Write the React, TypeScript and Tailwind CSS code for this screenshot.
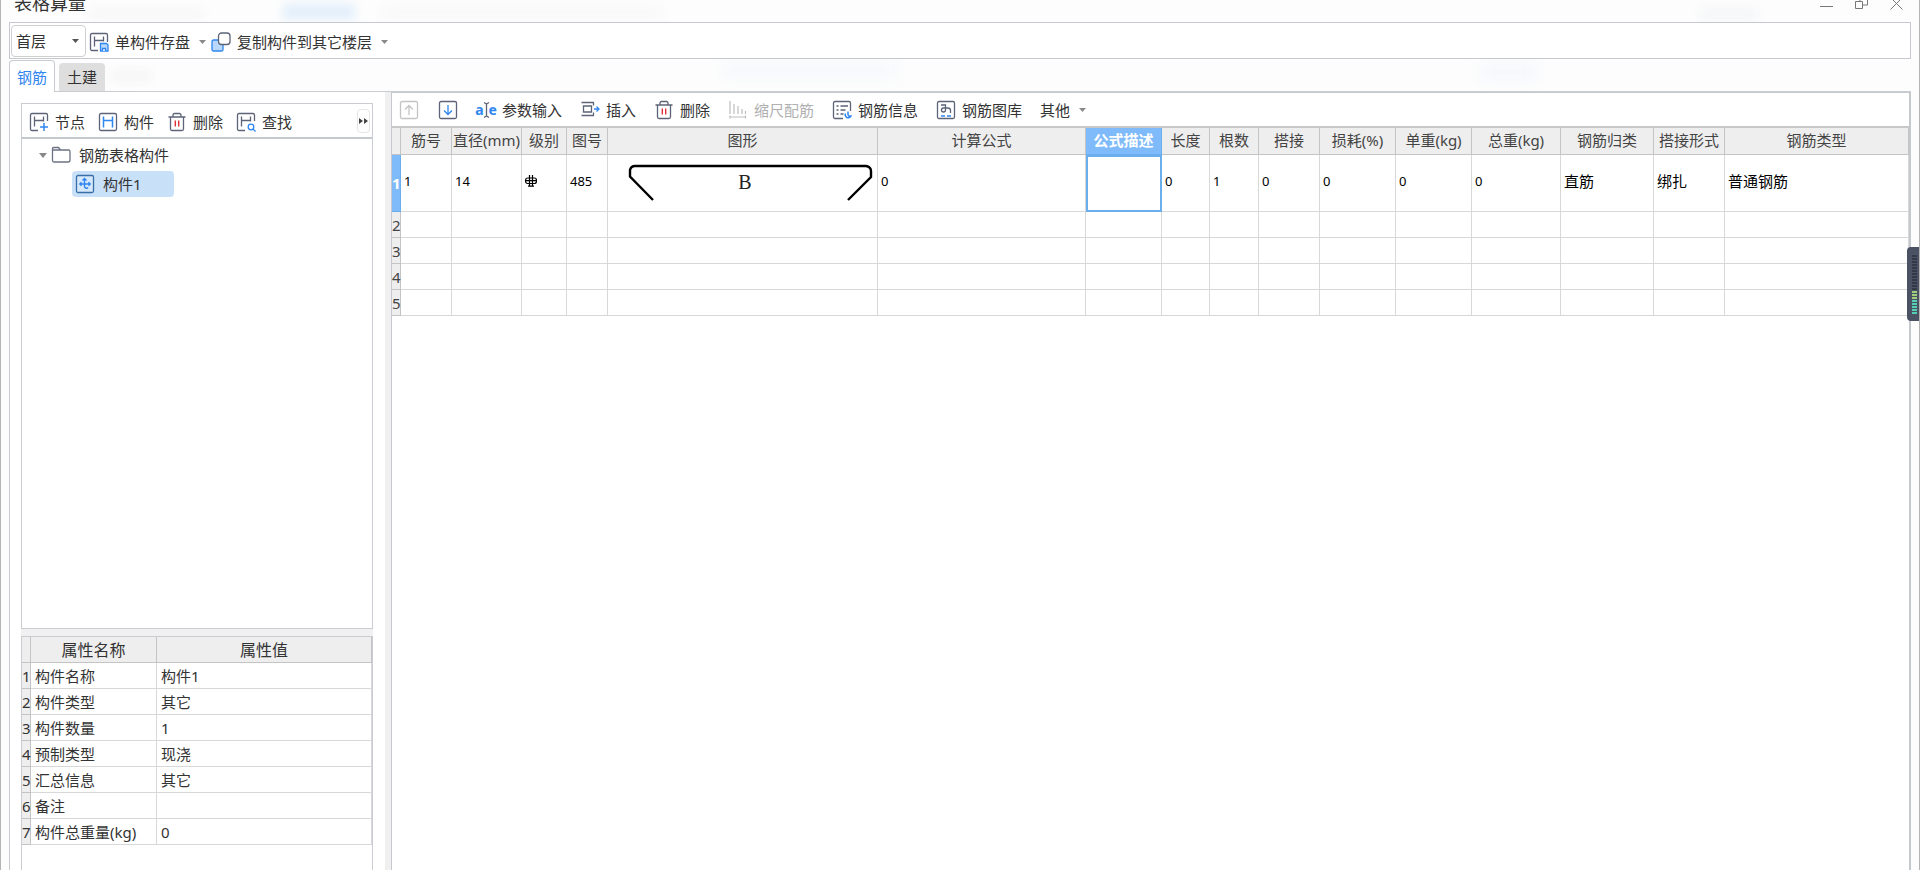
import React, { useState } from 'react';

type IconProps = { className?: string };

const Svg: React.FC<{ children: React.ReactNode; className?: string }> = ({ children, className = 'text-[#5d6478]' }) => (
  <svg className={`w-5 h-5 shrink-0 ${className}`} viewBox="0 0 20 20" fill="none" stroke="currentColor" strokeWidth="1.3">
    {children}
  </svg>
);

const Caret: React.FC<IconProps> = ({ className = 'text-[#8a8a8a]' }) => (
  <svg className={`w-[7px] h-1 shrink-0 ${className}`} viewBox="0 0 7 4" fill="currentColor">
    <path d="M0 0h7L3.5 4z" />
  </svg>
);

const SaveIcon = () => (
  <Svg>
    <path d="M9 18.5H3A1.5 1.5 0 0 1 1.5 17V3A1.5 1.5 0 0 1 3 1.5h14A1.5 1.5 0 0 1 18.5 3v7" />
    <path d="M5.5 14.5v-10M14.5 9.500v-5M5.500 8.500h9" />
    <path d="M11.500 11.500h6l1.500 1.500v6h-7.500z" stroke="#2f86f0" fill="#b9d8fb" />
    <path d="M13.500 19v-2.500h3V19" stroke="#2f86f0" fill="#fff" />
  </Svg>
);

const CopyIcon = () => (
  <Svg>
    <rect x="1" y="8" width="11" height="11" rx="1.5" stroke="#2f86f0" fill="#b9d8fb" />
    <rect x="7.5" y="1" width="11.5" height="11.5" rx="3" fill="#fff" />
  </Svg>
);

const NodeIcon = () => (
  <Svg>
    <path d="M9 18.5H3A1.5 1.5 0 0 1 1.5 17V3A1.5 1.5 0 0 1 3 1.5h14A1.5 1.5 0 0 1 18.5 3v6" />
    <path d="M5.5 14.5v-10M14.5 9.5v-5M5.5 8.5h9" />
    <path d="M15 11v8M11 15h8" stroke="#2f86f0" strokeWidth="1.5" />
  </Svg>
);

const MemberIcon = () => (
  <Svg>
    <rect x="1.5" y="1.5" width="17" height="17" rx="1.5" />
    <path d="M5.5 15.5v-11M14.5 15.5v-11M5.5 8.5h9" stroke="#2f86f0" strokeWidth="1.5" />
  </Svg>
);

const FindIcon = () => (
  <Svg>
    <path d="M9 18.5H3A1.5 1.5 0 0 1 1.5 17V3A1.5 1.5 0 0 1 3 1.5h14A1.5 1.5 0 0 1 18.5 3v6" />
    <path d="M5.5 14.5v-10M14.5 9.5v-5M5.5 8.5h9" />
    <circle cx="15" cy="15" r="2.8" stroke="#2f86f0" />
    <path d="M17 17l2.5 2.5" stroke="#2f86f0" />
  </Svg>
);

const TrashIcon = () => (
  <Svg>
    <path d="M1.5 5h17M3.5 5v12A1.5 1.5 0 0 0 5 18.5h10a1.5 1.5 0 0 0 1.5-1.5V5M6 5V3A1.5 1.5 0 0 1 7.5 1.5h5A1.5 1.5 0 0 1 14 3v2" />
    <path d="M8.3 8.500v6M11.700 8.500v6" stroke="#e2303a" strokeWidth="1.4" />
  </Svg>
);

const UpIcon = () => (
  <Svg className="text-[#c4c4c4]">
    <rect x="1.5" y="1.5" width="17" height="17" rx="1.5" />
    <path d="M10 15V5.5M6 9.5l4-4 4 4" />
  </Svg>
);

const DownIcon = () => (
  <Svg>
    <rect x="1.5" y="1.5" width="17" height="17" rx="1.5" />
    <path d="M10 5v9.5M6 10.5l4 4 4-4" stroke="#2f86f0" />
  </Svg>
);

const ParamIcon = () => (
  <span className="flex w-5 shrink-0 items-center justify-center text-[14px] leading-5 font-bold text-[#2f86f0]">
    a
    <svg className="w-[5px] h-4 shrink-0 overflow-visible" viewBox="0 0 5 16" fill="none" stroke="#5d6478" strokeWidth="1.3">
      <path d="M0 0.5L2.5 2 5 0.5M2.5 2v12M0 15.5L2.5 14 5 15.5" />
    </svg>
    e
  </span>
);

const InsertIcon = () => (
  <Svg>
    <path d="M1.5 2.5h12.5M1.500 15.500H14M3.500 6h8v6h-8zM13.500 2.500v3M13.500 15.500v-3" />
    <path d="M14 9h5M16.500 6.500L19 9l-2.500 2.500" stroke="#2f86f0" />
  </Svg>
);

const ScaleIcon = () => (
  <Svg className="text-[#bdbdbd]">
    <path d="M2 1v13M6 4v10M10 6v8M14 9v5M17.5 11v3M2 17h16M2 15.5v3M17.5 15.5v3" strokeWidth="1.2" />
  </Svg>
);

const InfoIcon = () => (
  <Svg>
    <path d="M11 18.5H3A1.5 1.5 0 0 1 1.5 17V3A1.5 1.5 0 0 1 3 1.5h14A1.5 1.5 0 0 1 18.5 3v8" />
    <path d="M4.5 6h2M8.5 6h7.5M4.5 10h2M8.5 10h5M4.5 14h2M8.5 14h3" />
    <path d="M16 11.5v4M13.5 13.5a3 3 0 1 0 5.5 2.500h-3" stroke="#2f86f0" strokeWidth="1.5" />
  </Svg>
);

const LibraryIcon = () => (
  <Svg>
    <rect x="1.5" y="1.5" width="17" height="17" rx="1.5" />
    <path d="M5 5h4.5v5a2 2 0 1 1-2-2H12a2.5 2.5 0 0 1 2.5 2.5V13" />
    <path d="M5 16h4M11 16h4" stroke="#2f86f0" strokeWidth="1.5" />
  </Svg>
);

const FolderIcon = () => (
  <Svg className="text-[#6d7385]">
    <path d="M1.5 15.500V3.500A1 1 0 0 1 2.500 2.500h5L9.500 5h8a1.500 1.500 0 0 1 1.500 1.500V15a2 2 0 0 1-2 2H3a1.500 1.500 0 0 1-1.500-1.500zM9.500 5h-8" />
  </Svg>
);

const ComponentIcon = () => (
  <Svg className="text-[#3a6ea5]">
    <rect x="1.5" y="1.5" width="17" height="17" rx="1.5" fill="#d6e8fc" />
    <path d="M9.500 12V5M7.500 6.500L9.500 4.500l2 2M5 10h9.500M6.500 8.300L4.800 10l1.700 1.700M13.500 8.300l1.700 1.700-1.700 1.700M9.500 12a2 2 0 0 0 3.500 1.500" stroke="#2f86f0" strokeWidth="1.4" />
  </Svg>
);

interface ToolButtonProps {
  icon?: React.ReactNode;
  label: string;
  caret?: boolean;
  disabled?: boolean;
}

const ToolButton: React.FC<ToolButtonProps> = ({ icon, label, caret, disabled }) => (
  <button disabled={disabled} className={`flex items-center gap-[6px] whitespace-nowrap ${disabled ? 'text-[#b0b0b0]' : 'text-[#333]'}`}>
    {icon}
    <span>{label}</span>
    {caret && <span className="pl-[3px]"><Caret /></span>}
  </button>
);

// 钢筋 485 号图形
const BarShape = () => (
  <svg className="block w-[269px] h-14" viewBox="0 0 269 56" fill="none" stroke="#000" strokeWidth="2.4">
    <path d="M45 45L22 21.5V15q1-4 5-4H258q5 1 5 5v6L240 45" />
    <text x="137" y="34" textAnchor="middle" fontSize="20" fill="#222" stroke="none" fontFamily="'Liberation Serif', serif">B</text>
  </svg>
);

const GradeSymbol = () => (
  <svg className="w-3 h-3" viewBox="0 0 12 12" fill="none" stroke="#000" strokeWidth="1.2" aria-label="HRB400">
    <rect x="0.6" y="3" width="10.8" height="5.5" rx="2" />
    <path d="M4.5 0v11.5M7.5 0v11.5M1 5.7h10M3 11.2h6" />
  </svg>
);

const columns = [
  { title: '筋号', width: 'w-[51px]' },
  { title: '直径(mm)', width: 'w-[70px]' },
  { title: '级别', width: 'w-[45px]' },
  { title: '图号', width: 'w-[41px]' },
  { title: '图形', width: 'w-[270px]' },
  { title: '计算公式', width: 'w-[208px]' },
  { title: '公式描述', width: 'w-[76px]' },
  { title: '长度', width: 'w-[48px]' },
  { title: '根数', width: 'w-[49px]' },
  { title: '搭接', width: 'w-[61px]' },
  { title: '损耗(%)', width: 'w-[76px]' },
  { title: '单重(kg)', width: 'w-[76px]' },
  { title: '总重(kg)', width: 'w-[89px]' },
  { title: '钢筋归类', width: 'w-[93px]' },
  { title: '搭接形式', width: 'w-[71px]' },
  { title: '钢筋类型', width: '' },
];

const SHAPE_COLUMN = 4;
const ACTIVE_COLUMN = 6;

const firstRow: React.ReactNode[] = [
  '1', '14', <GradeSymbol />, '485', <BarShape />, '0', '', '0', '1', '0', '0', '0', '0', '直筋', '绑扎', '普通钢筋',
];

const properties = [
  ['构件名称', '构件1'],
  ['构件类型', '其它'],
  ['构件数量', '1'],
  ['预制类型', '现浇'],
  ['汇总信息', '其它'],
  ['备注', ''],
  ['构件总重量(kg)', '0'],
];

const RebarTable = () => (
  <table className="w-full table-fixed border-separate border-spacing-0">
    <colgroup>
      <col className="w-[9px]" />
      {columns.map((c) => <col key={c.title} className={c.width} />)}
    </colgroup>
    <thead>
      <tr className="h-[27px] bg-[#eeeeee] text-[#444]">
        <th className="border-r border-b border-[#c4c4c4]" />
        {columns.map((c, i) => (
          <th
            key={c.title}
            className={`border-r border-b px-0 pt-0 pb-[2px] whitespace-nowrap ${
              i === ACTIVE_COLUMN ? 'border-[#6aaeee] bg-[#7fbbfb] font-bold text-white' : 'border-[#c4c4c4] font-normal'
            }`}
          >
            {c.title}
          </th>
        ))}
      </tr>
    </thead>
    <tbody>
      <tr className="h-[57px] text-black">
        <th className="border-r border-b border-[#6aaeee] bg-[#7fbbfb] p-0 font-bold text-white">1</th>
        {firstRow.map((value, i) => {
          if (i === ACTIVE_COLUMN) {
            return (
              <td key={i} className="h-[57px] p-0">
                <input aria-label="公式描述" className="block h-[57px] w-full border-2 border-[#6aaeee] bg-white px-1 outline-none" />
              </td>
            );
          }
          return (
            <td
              key={i}
              className={`border-r border-b border-[#d8d8d8] pt-0 pr-0 ${i === SHAPE_COLUMN ? 'p-0' : 'pb-1 pl-[3px]'} ${i < 13 ? 'text-[13px]' : ''}`}
            >
              {value}
            </td>
          );
        })}
      </tr>
      {[2, 3, 4, 5].map((n) => (
        <tr key={n} className="h-[26px]">
          <th className="border-r border-b border-[#c4c4c4] bg-[#eeeeee] p-0 font-normal text-[#444]">{n}</th>
          {columns.map((c) => <td key={c.title} className="border-r border-b border-[#d8d8d8] p-0" />)}
        </tr>
      ))}
    </tbody>
  </table>
);

const PropertyTable = () => (
  <table className="w-full table-fixed border-separate border-spacing-0 text-[#333]">
    <colgroup>
      <col className="w-[9px]" />
      <col className="w-[126px]" />
      <col />
    </colgroup>
    <thead>
      <tr className="h-[26px] bg-[#eeeeee] text-base leading-5">
        <th className="border-r border-b border-[#c4c4c4]" />
        <th className="border-r border-b border-[#c4c4c4] p-0 font-normal">属性名称</th>
        <th className="border-r border-b border-[#c4c4c4] p-0 font-normal">属性值</th>
      </tr>
    </thead>
    <tbody>
      {properties.map(([name, value], i) => (
        <tr key={name} className="h-[26px]">
          <th className="border-r border-b border-[#c4c4c4] bg-[#eeeeee] p-0 font-normal">{i + 1}</th>
          <td className="border-r border-b border-[#d8d8d8] py-0 pr-0 pl-1 whitespace-nowrap">{name}</td>
          <td className="border-r border-b border-[#d8d8d8] py-0 pr-0 pl-1">{value}</td>
        </tr>
      ))}
    </tbody>
  </table>
);

const App: React.FC = () => {
  const [floor, setFloor] = useState('首层');
  const [tab, setTab] = useState<'rebar' | 'civil'>('rebar');

  const tabClass = (active: boolean) =>
    active
      ? 'relative z-10 -mb-px h-8 rounded-t border border-b-0 border-[#c9cdd1] bg-white px-[7px] text-[#2f86f0]'
      : 'ml-1 h-7 rounded-t bg-[#dedede] px-2 text-[#333]';

  return (
    <div className="relative flex h-screen flex-col overflow-hidden border-x border-[#b4b4b4] bg-[#fdfdfd] pl-2 pr-2 font-['Noto_Sans','Noto_Sans_CJK_SC',sans-serif] text-[15px] leading-5">
      {/* Frosted title bar backdrop */}
      <div className="pointer-events-none absolute inset-x-0 top-0 h-24" aria-hidden="true">
        <div className="absolute left-[282px] top-1 h-4 w-[72px] bg-[#e3effb] blur-[5px]" />
        <div className="absolute left-[90px] top-2 h-3 w-28 bg-[#f7f7f7] blur-[5px]" />
        <div className="absolute left-[380px] top-2 h-3 w-[280px] bg-[#f8f8f8] blur-[6px]" />
        <div className="absolute left-[1700px] top-2 h-3 w-[56px] bg-[#f4f6f8] blur-[5px]" />
        <div className="absolute left-[110px] top-[70px] h-3 w-10 bg-[#f6f6f6] blur-[5px]" />
        <div className="absolute left-[720px] top-[62px] h-4 w-44 bg-[#f6f9fc] blur-[6px]" />
        <div className="absolute left-[1480px] top-[64px] h-4 w-14 bg-[#f5f8fc] blur-[6px]" />
      </div>

      {/* Title bar */}
      <div className="relative flex h-[22px] shrink-0 items-start justify-between pl-[5px]">
        <h1 className="-mt-[9px] text-lg leading-6 text-[#333]">表格算量</h1>
        <div className="flex h-[10px] items-end gap-[22px] pr-2 text-[#777]">
          <button aria-label="最小化">
            <svg className="block w-[13px] h-[13px]" viewBox="0 0 13 13" stroke="currentColor"><path d="M0 9.5h13" /></svg>
          </button>
          <button aria-label="还原">
            <svg className="block w-[13px] h-[13px]" viewBox="0 0 13 13" fill="none" stroke="currentColor"><path d="M0.5 4.5h7v7h-7zM5 4.5V1h7.5v7H8" /></svg>
          </button>
          <button aria-label="关闭">
            <svg className="block w-[13px] h-[13px]" viewBox="0 0 13 13" stroke="currentColor"><path d="M0.5 0.5l12 12M12.5 0.5l-12 12" /></svg>
          </button>
        </div>
      </div>

      {/* Main toolbar */}
      <div className="relative flex h-[37px] shrink-0 items-center border border-[#c5c9cd] bg-white pl-px">
        <div className="relative flex items-center">
          <select
            aria-label="楼层"
            value={floor}
            onChange={(e) => setFloor(e.target.value)}
            className="h-8 w-[75px] appearance-none rounded border border-[#cfcfcf] bg-white pl-1 text-[#333] outline-none"
          >
            <option>首层</option>
          </select>
          <Caret className="pointer-events-none absolute right-[7px] text-[#555]" />
        </div>
        <div className="flex items-center gap-[5px] pt-[2px] pl-[3px]">
          <ToolButton icon={<SaveIcon />} label="单构件存盘" caret />
          <ToolButton icon={<CopyIcon />} label="复制构件到其它楼层" caret />
        </div>
      </div>

      {/* Tabs */}
      <div className="relative flex h-8 shrink-0 items-end">
        <button onClick={() => setTab('rebar')} className={tabClass(tab === 'rebar')}>钢筋</button>
        <button onClick={() => setTab('civil')} className={tabClass(tab === 'civil')}>土建</button>
      </div>

      <div className="relative flex min-h-0 flex-1 border-l border-t border-[#c9cdd1] bg-white">
        {/* Left panel */}
        <aside className="flex w-[363px] shrink-0 flex-col pl-[11px] pt-[11px]">
          <div className="flex min-h-0 flex-1 flex-col border border-[#c9cdd1]">
            <div className="flex h-[35px] shrink-0 items-center justify-between border-b-2 border-[#c5c9cd] pl-[7px] pr-[2px]">
              <div className="flex items-center gap-[13px] pt-[2px]">
                <ToolButton icon={<NodeIcon />} label="节点" />
                <ToolButton icon={<MemberIcon />} label="构件" />
                <ToolButton icon={<TrashIcon />} label="删除" />
                <ToolButton icon={<FindIcon />} label="查找" />
              </div>
              <button aria-label="更多" className="flex h-6 w-[13px] items-center justify-center rounded border border-[#e6e6e6]">
                <svg className="w-[9px] h-[6px] shrink-0" viewBox="0 0 9 6" fill="#444"><path d="M0 0l4 3-4 3zM5 0l4 3-4 3z" /></svg>
              </button>
            </div>
            <ul className="pt-[2px] text-[#333]">
              <li className="flex h-7 items-center pl-[17px]">
                <svg className="w-2 h-[5px] shrink-0" viewBox="0 0 8 5" fill="#888"><path d="M0 0h8L4 5z" /></svg>
                <span className="flex items-center gap-2 pl-1"><FolderIcon />钢筋表格构件</span>
              </li>
              <li className="pl-[50px] pt-[2px]">
                <div className="flex h-[26px] w-[102px] items-center gap-2 rounded-sm bg-[#c9e0f9] pl-[3px]"><ComponentIcon />构件1</div>
              </li>
            </ul>
          </div>
          <div className="h-[7px] shrink-0 bg-[#f0f0f0]" />
          <div className="h-[234px] shrink-0 border border-b-0 border-[#c9cdd1]">
            <PropertyTable />
          </div>
        </aside>

        <div className="w-3 shrink-0" />
        <div className="w-[6px] shrink-0 bg-[#f0f0f0]" />

        {/* Right panel */}
        <main className="min-w-0 flex-1 border-l border-r-2 border-t border-[#c5c9cd]">
          <div className="flex h-[35px] items-center gap-[18px] border-b-2 border-[#c8c8c8] pl-[7px]">
            <div className="flex items-center gap-[19px]">
              <button aria-label="上移" disabled><UpIcon /></button>
              <button aria-label="下移"><DownIcon /></button>
            </div>
            <ToolButton icon={<ParamIcon />} label="参数输入" />
            <ToolButton icon={<InsertIcon />} label="插入" />
            <ToolButton icon={<TrashIcon />} label="删除" />
            <ToolButton icon={<ScaleIcon />} label="缩尺配筋" disabled />
            <ToolButton icon={<InfoIcon />} label="钢筋信息" />
            <ToolButton icon={<LibraryIcon />} label="钢筋图库" />
            <ToolButton label="其他" caret />
          </div>
          <RebarTable />
        </main>
      </div>

      {/* Side level meter */}
      <div className="absolute -right-px top-[247px] flex h-[74px] w-[13px] flex-col items-end gap-px rounded-l bg-[#4b5264] pr-[3px] pt-2">
        {Array.from({ length: 20 }, (_, i) => (
          <span key={i} className={`h-[2px] w-[5px] shrink-0 ${i < 12 ? 'bg-[#333948]' : i < 15 ? 'bg-[#9fce7a]' : 'bg-[#55cfb4]'}`} />
        ))}
      </div>
    </div>
  );
};

export default App;
